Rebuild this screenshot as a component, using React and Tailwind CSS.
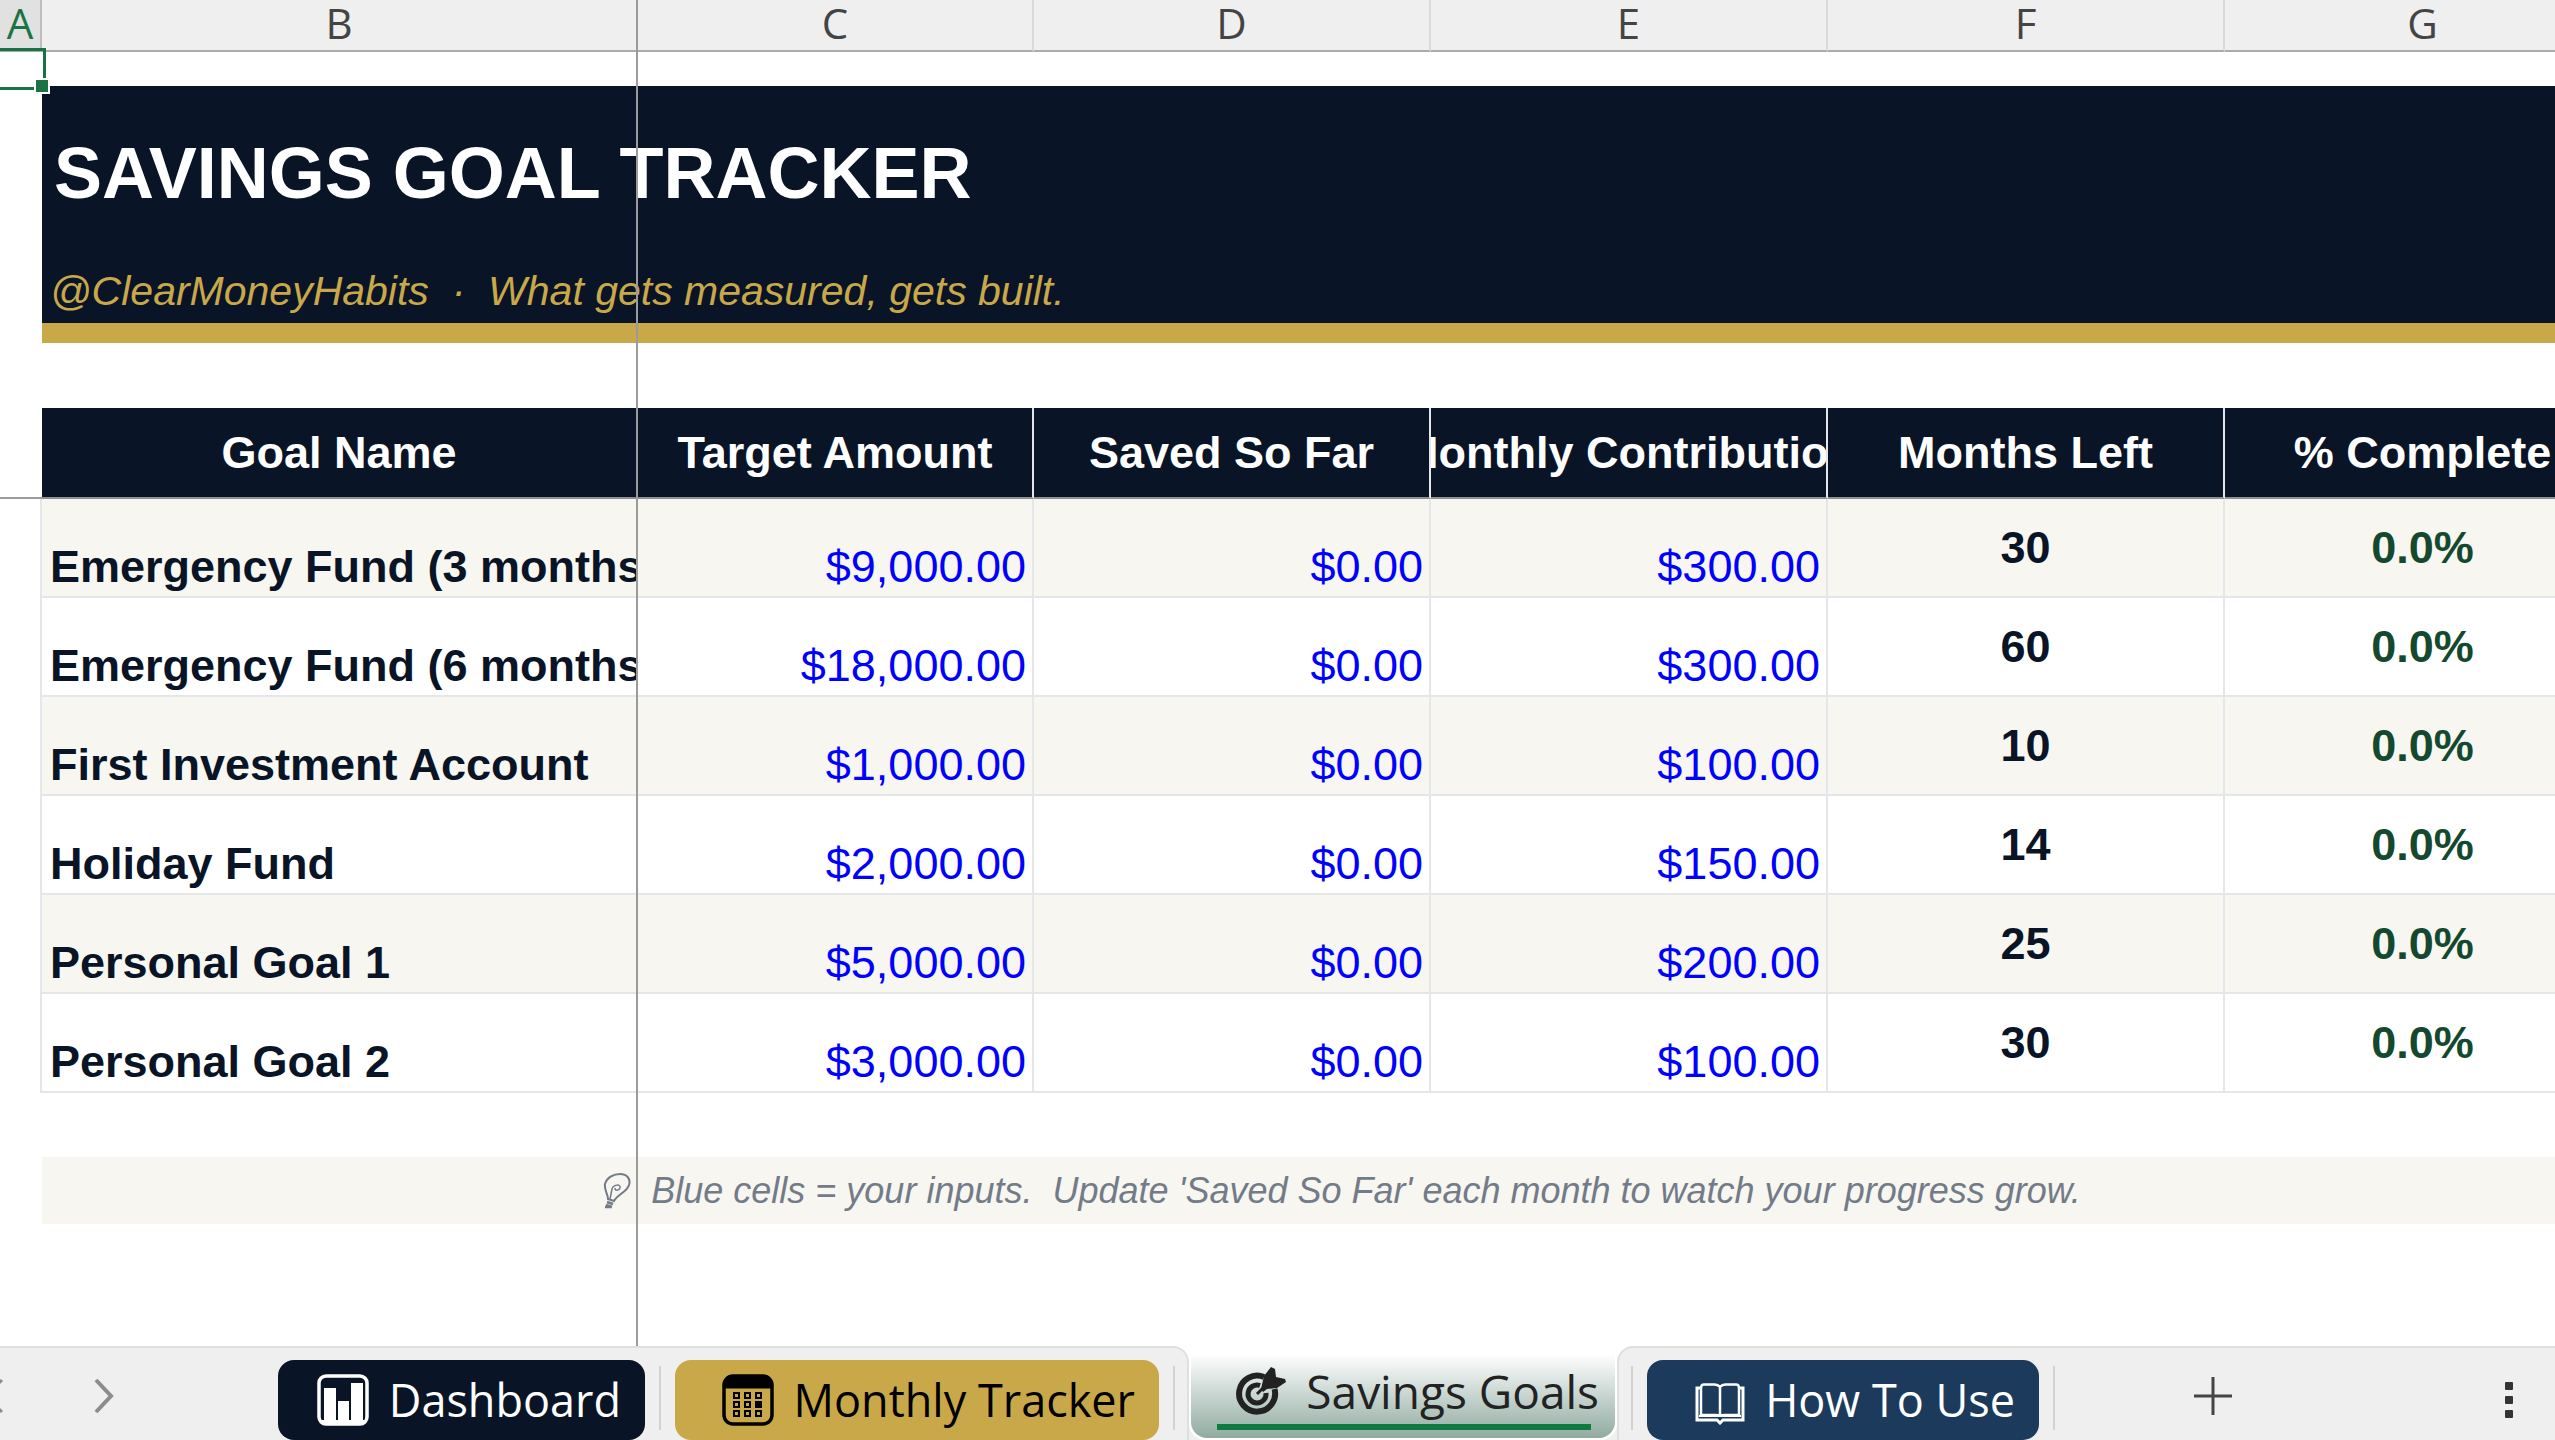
import clsx from "clsx";

const COLUMNS = ["A", "B", "C", "D", "E", "F", "G"];

const HEADINGS = [
	"Goal Name",
	"Target Amount",
	"Saved So Far",
	"Monthly Contribution",
	"Months Left",
	"% Complete",
];

const GOALS = [
	{ name: "Emergency Fund (3 months)", target: "$9,000.00", saved: "$0.00", monthly: "$300.00", left: 30, done: "0.0%" },
	{ name: "Emergency Fund (6 months)", target: "$18,000.00", saved: "$0.00", monthly: "$300.00", left: 60, done: "0.0%" },
	{ name: "First Investment Account", target: "$1,000.00", saved: "$0.00", monthly: "$100.00", left: 10, done: "0.0%" },
	{ name: "Holiday Fund", target: "$2,000.00", saved: "$0.00", monthly: "$150.00", left: 14, done: "0.0%" },
	{ name: "Personal Goal 1", target: "$5,000.00", saved: "$0.00", monthly: "$200.00", left: 25, done: "0.0%" },
	{ name: "Personal Goal 2", target: "$3,000.00", saved: "$0.00", monthly: "$100.00", left: 30, done: "0.0%" },
];

function BulbIcon() {
	return (
		<svg className="h-9 w-7" viewBox="0 0 28 36" fill="none" stroke="currentColor" strokeWidth="2">
			<path d="M5 26C5 21 1 17 2 11C4 4 11 1 17 1C24 1 28 6 26 12C24 19 15 21 11 28Z" />
			<path d="M7 26L9 16C10 12 18 10 17 15C16 18 12 18 12 15" strokeWidth="1.5" />
			<path d="M4 29L10 31M3 32L9 34M2 34H8" strokeWidth="2.5" />
		</svg>
	);
}

function ChartIcon() {
	return (
		<svg className="h-[52px] w-[52px]" viewBox="0 0 52 52" fill="currentColor">
			<rect x="2" y="2" width="48" height="48" rx="7" fill="none" stroke="currentColor" strokeWidth="3.5" />
			<rect x="7" y="14" width="12" height="35" />
			<rect x="21" y="27" width="11" height="22" />
			<rect x="34" y="9" width="12" height="40" />
			<rect x="4" y="46" width="44" height="4" />
		</svg>
	);
}

function CalendarIcon() {
	return (
		<svg className="h-[52px] w-[52px]" viewBox="0 0 52 52" fill="none" stroke="currentColor">
			<rect x="2" y="2" width="48" height="48" rx="9" strokeWidth="3.5" />
			<path d="M2 14V10Q2 2 10 2H42Q50 2 50 10V14Z" fill="currentColor" />
			{[19, 28, 37].map((y) =>
				[12, 23, 34].map((x) => (
					<rect
						key={`${x}-${y}`}
						x={x}
						y={y}
						width="5"
						height="5"
						strokeWidth="2"
						fill={x === 34 && y === 28 ? "currentColor" : "none"}
					/>
				)),
			)}
		</svg>
	);
}

function TargetIcon() {
	return (
		<svg className="h-12 w-[50px]" viewBox="0 0 50 48" fill="none" stroke="currentColor">
			<path d="M28 10A18 18 0 1 0 38.500 22" strokeWidth="6" />
			<path d="M24 18.500A9 9 0 1 0 30 26" strokeWidth="5" />
			<path d="M21 27L34 14" strokeWidth="3" />
			<path d="M25 22L28 9L35 0L39 2L40 10L49 12L50 15L41 21L31 22L27 25Z" fill="currentColor" stroke="none" />
		</svg>
	);
}

function BookIcon() {
	return (
		<svg className="mt-2 h-[42px] w-[50px]" viewBox="0 0 50 42" fill="none" stroke="currentColor">
			<path d="M25 4Q23 1.500 19 1.500H9Q6 1.500 6 5V32H21Q25 32 25 34Q25 32 29 32H44V5Q44 1.500 41 1.500H31Q27 1.500 25 4V33" strokeWidth="2.500" />
			<path d="M5 5H2V37H22L25 40L28 37H48V5H45" strokeWidth="3" />
			<path d="M4 33H46" strokeWidth="2" />
		</svg>
	);
}

function Separator() {
	return <span className="mt-2 h-16 w-0.5 shrink-0 bg-[#d2d2d2]" />;
}

function SheetTab({ icon, label, className }) {
	return (
		<button
			className={clsx(
				"mt-3 flex h-20 shrink-0 items-center justify-end rounded-2xl pr-6 text-[45px]",
				className,
			)}
		>
			{icon}
			<span className="ml-5 whitespace-nowrap">{label}</span>
		</button>
	);
}

function Sheet() {
	return (
		<table className="w-[2622px] table-fixed border-separate border-spacing-0 font-['Liberation_Sans',Arial,sans-serif] text-[45px] leading-[50px] text-[#091426]">
			<colgroup>
				<col className="w-[42px]" />
				<col className="w-[596px]" />
				<col className="w-[396px]" />
				<col className="w-[397px]" />
				<col className="w-[397px]" />
				<col className="w-[397px]" />
				<col className="w-[397px]" />
			</colgroup>
			<thead>
				<tr className="h-[52px] bg-[#efefef] font-['Open_Sans','Noto_Sans',sans-serif] text-[42px] leading-[48px] text-[#444]">
					{COLUMNS.map((col) => (
						<th
							key={col}
							scope="col"
							className={clsx(
								"border-r-2 border-b-2 border-b-[#ababab] p-0 pb-1 font-normal leading-[44px]",
								col === "A"
									? "border-r-[#bdbdbd] bg-[#e1e1e1] text-[#1a7343]"
									: "border-r-[#d9dadc]",
							)}
						>
							{col}
						</th>
					))}
				</tr>
			</thead>
			<tbody>
				<tr className="h-[34px]">
					<td className="relative p-0">
						<span className="absolute -inset-y-1 -right-1 -left-1 border-3 border-[#1a7343]" />
						<span className="absolute -right-2 -bottom-2 z-10 size-4 border-2 border-white bg-[#1a7343]" />
					</td>
					<td colSpan={6} />
				</tr>
				<tr className="h-[174px]">
					<td />
					<td colSpan={6} className="bg-[#091426] p-0 pl-3">
						<h1 className="text-[72px] leading-20 font-bold text-white">SAVINGS GOAL TRACKER</h1>
					</td>
				</tr>
				<tr className="h-[63px]">
					<td />
					<td colSpan={6} className="bg-[#091426] p-0 pb-2 pl-2 align-bottom text-[41px] leading-12 whitespace-pre text-[#c9a84a] italic">
						{"@ClearMoneyHabits  ·  What gets measured, gets built."}
					</td>
				</tr>
				<tr className="h-5">
					<td className="p-0" />
					<td colSpan={6} className="bg-[#c9a84a] p-0" />
				</tr>
				<tr className="h-[65px]">
					<td colSpan={7} />
				</tr>
				<tr className="h-[91px] text-white">
					<td className="border-b-2 border-[#9b9b9b]" />
					{HEADINGS.map((heading) => (
						<th
							key={heading}
							scope="col"
							className="overflow-hidden border-r-2 border-b-2 border-r-[#e4e6ea] border-b-[#8f8f8f] bg-[#091426] p-0"
						>
							<div className="flex justify-center whitespace-nowrap">{heading}</div>
						</th>
					))}
				</tr>
				{GOALS.map((goal) => (
					<tr
						key={goal.name}
						className="h-[99px] odd:bg-[#f7f6f1] even:bg-white *:border-r-2 *:border-[#e4e6ea] *:p-0"
					>
						<td className="bg-white" />
						<th scope="row" className="overflow-hidden border-b-2 pb-1! pl-2! text-left align-bottom whitespace-nowrap">
							{goal.name}
						</th>
						<td className="border-b-2 pr-1.5! pb-1! text-right align-bottom text-[#0000ff]">{goal.target}</td>
						<td className="border-b-2 pr-1.5! pb-1! text-right align-bottom text-[#0000ff]">{goal.saved}</td>
						<td className="border-b-2 pr-1.5! pb-1! text-right align-bottom text-[#0000ff]">{goal.monthly}</td>
						<td className="border-b-2 text-center font-bold">{goal.left}</td>
						<td className="border-b-2 text-center font-bold text-[#14492f]">{goal.done}</td>
					</tr>
				))}
				<tr className="h-16">
					<td colSpan={7} />
				</tr>
				<tr className="h-[67px]">
					<td />
					<td colSpan={6} className="bg-[#f7f6f1] p-0 text-[36px] leading-12 text-[#747b88] italic">
						<div className="flex items-center justify-center gap-5 pl-5 whitespace-pre">
							<BulbIcon />
							{"Blue cells = your inputs.  Update 'Saved So Far' each month to watch your progress grow."}
						</div>
					</td>
				</tr>
			</tbody>
		</table>
	);
}

function TabBar() {
	return (
		<nav className="flex h-[94px] shrink-0 overflow-hidden bg-linear-to-b from-white from-50% to-[#efefef] to-50% font-['Open_Sans','Noto_Sans',sans-serif]">
			<div className="flex shrink-0 items-center gap-3.5 rounded-tr-2xl border-t-2 border-r-2 border-[#dfdfdf] bg-[#efefef] pr-3">
				<div className="mt-1 flex w-[264px] items-center text-[#8c8c8c]">
					<button aria-label="Previous sheet" className="-ml-4">
						<svg className="h-9 w-5" viewBox="0 0 20 36" fill="none" stroke="currentColor" strokeWidth="3">
							<path d="M18 2L2 18L18 34" />
						</svg>
					</button>
					<button aria-label="Next sheet" className="ml-[90px]">
						<svg className="h-9 w-5" viewBox="0 0 20 36" fill="none" stroke="currentColor" strokeWidth="4">
							<path d="M2 2L17 18L2 34" />
						</svg>
					</button>
				</div>
				<SheetTab icon={<ChartIcon />} label="Dashboard" className="w-[367px] bg-[#091426] text-white" />
				<Separator />
				<SheetTab icon={<CalendarIcon />} label="Monthly Tracker" className="w-[484px] bg-[#c9a84a] text-black" />
				<Separator />
			</div>
			<div className="shrink-0 rounded-b-2xl bg-white px-0.5 pb-0.5">
				<button className="mt-2 flex h-[84px] w-[424px] flex-col items-end rounded-b-2xl bg-linear-to-b from-white to-[#91aba1] pt-1 pr-4 text-[46px] leading-[66px] font-medium text-[#222]">
					<span className="flex items-center gap-5 whitespace-nowrap">
						<TargetIcon />
						Savings Goals
					</span>
					<span className="mr-2 h-1.5 w-[374px] bg-[#0f7b41]" />
				</button>
			</div>
			<div className="flex grow items-center gap-3.5 rounded-tl-2xl border-t-2 border-l-2 border-[#dfdfdf] bg-[#efefef] pl-3">
				<Separator />
				<SheetTab icon={<BookIcon />} label="How To Use" className="w-[392px] bg-[#1b3a5c] text-white" />
				<Separator />
				<button aria-label="New sheet" className="mt-1 ml-31">
					<svg className="size-10" viewBox="0 0 40 40" stroke="#444" strokeWidth="3">
						<path d="M20 1V39M1 20H39" />
					</svg>
				</button>
				<button aria-label="More options" className="mt-3 mr-10 ml-auto">
					<svg className="h-9 w-3" viewBox="0 0 12 36" fill="#333">
						<rect x="2" y="0" width="8" height="8" rx="1" />
						<rect x="2" y="14" width="8" height="8" rx="1" />
						<rect x="2" y="28" width="8" height="8" rx="1" />
					</svg>
				</button>
			</div>
		</nav>
	);
}

function App() {
	return (
		<div className="flex h-screen flex-col overflow-hidden bg-white">
			<main className="relative min-h-0 grow overflow-hidden">
				<Sheet />
				{/* frozen pane edge */}
				<div className="absolute inset-y-0 left-[636px] w-0.5 bg-[#9b9b9b]" />
			</main>
			<TabBar />
		</div>
	);
}

export default App;
